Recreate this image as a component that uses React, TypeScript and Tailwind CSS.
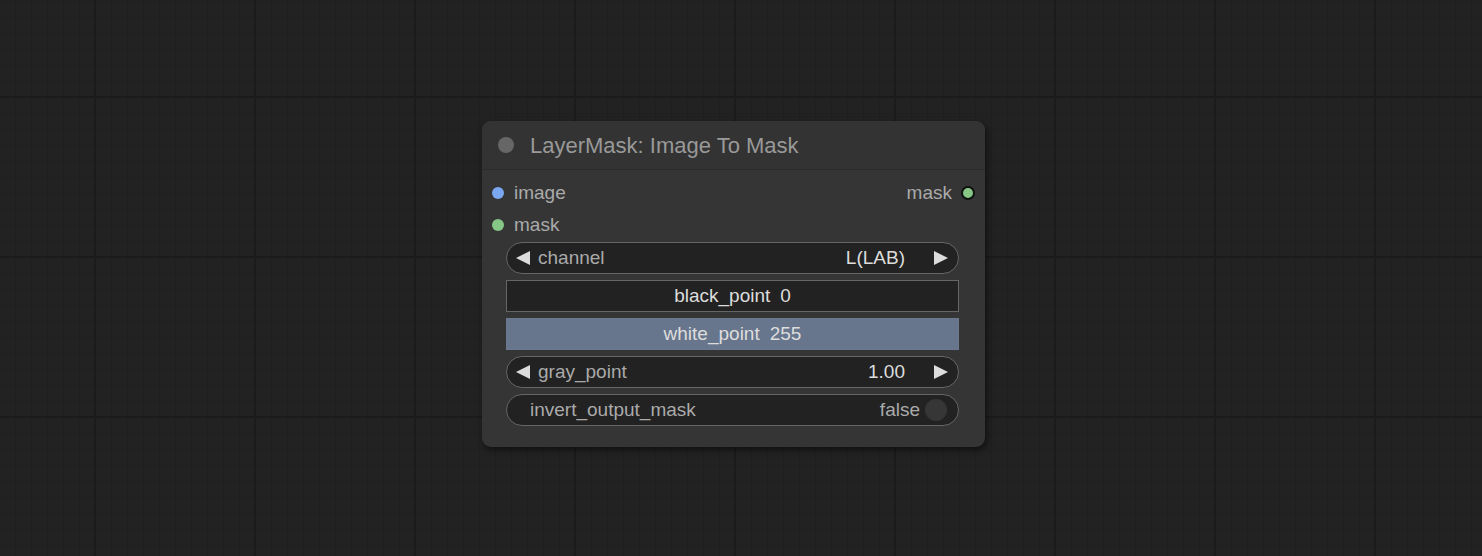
import React from 'react';

const font = { fontFamily: '"Liberation Sans", Arial, sans-serif' };

function Arrow({ dir }: { dir: 'left' | 'right' }) {
  return (
    <svg width="16" height="16" viewBox="0 0 16 16" className="shrink-0">
      {dir === 'left' ? (
        <polygon points="15,1 15,15 1,8" fill="#dddddd" />
      ) : (
        <polygon points="1,1 1,15 15,8" fill="#dddddd" />
      )}
    </svg>
  );
}

function ComboWidget({ label, value }: { label: string; value: string }) {
  return (
    <div className="flex h-[32px] items-center rounded-full border border-[#666] bg-[#222] pl-[8px] pr-[9px] text-[19px]">
      <Arrow dir="left" />
      <span className="ml-[7px] text-[#aaa]">{label}</span>
      <span className="ml-auto mr-[28px] text-[#ddd]">{value}</span>
      <Arrow dir="right" />
    </div>
  );
}

function Slider({ label, value, fill }: { label: string; value: string; fill?: boolean }) {
  return (
    <div
      className={`flex h-[32px] items-center justify-center border text-[19px] text-[#ddd] ${
        fill ? 'border-[#6a7890] bg-[#67768c]' : 'border-[#666] bg-[#222]'
      }`}
    >
      <span>{label}</span>
      <span className="ml-[10px]">{value}</span>
    </div>
  );
}

function Toggle({ label, value }: { label: string; value: string }) {
  return (
    <div className="flex h-[32px] items-center rounded-full border border-[#666] bg-[#222] pl-[23px] pr-[11px] text-[19px]">
      <span className="text-[#aaa]">{label}</span>
      <span className="ml-auto mr-[5px] text-[#aaa]">{value}</span>
      <span className="h-[22px] w-[22px] rounded-full bg-[#363636]" />
    </div>
  );
}

export default function App() {
  return (
    <div
      className="relative h-[556px] w-full overflow-hidden bg-[#222222] bg-[linear-gradient(to_right,#1b1b1b_2px,transparent_2px),linear-gradient(to_bottom,#1b1b1b_2px,transparent_2px),linear-gradient(to_right,#1f1f1f_1px,transparent_1px),linear-gradient(to_bottom,#1f1f1f_1px,transparent_1px)] [background-size:160px_160px,160px_160px,16px_16px,16px_16px] [background-position:94px_0,0_96px,15px_0,0_1px]"
      style={font}
    >
      {/* node on canvas */}
      <div className="absolute left-[482px] top-[121px] w-[503px] rounded-[9px] bg-[#353535] shadow-[2px_3px_6px_rgba(0,0,0,0.5)]">
        <div className="flex h-[49px] items-center rounded-t-[9px] border-b border-[#2b2b2b] bg-[#333333] pl-[16px]">
          <span className="h-[16px] w-[16px] rounded-full bg-[#666]" />
          <span className="ml-[16px] text-[22px] text-[#999]">LayerMask: Image To Mask</span>
        </div>

        <div className="flex flex-col px-[10px] pt-[12px]">
          <div className="flex h-[22px] items-center text-[19px] text-[#aaa]">
            <span className="h-[12px] w-[12px] rounded-full bg-[#7ba7f0]" />
            <span className="ml-[10px]">image</span>
            <span className="ml-auto">mask</span>
            <span className="ml-[9px] h-[14px] w-[14px] rounded-full border-2 border-[#111] bg-[#86c786]" />
          </div>
          <div className="mt-[10px] flex h-[22px] items-center text-[19px] text-[#aaa]">
            <span className="h-[12px] w-[12px] rounded-full bg-[#86c786]" />
            <span className="ml-[10px]">mask</span>
          </div>
        </div>

        <div className="flex flex-col gap-[6px] pb-[21px] pl-[24px] pr-[26px] pt-[6px]">
          <ComboWidget label="channel" value="L(LAB)" />
          <Slider label="black_point" value="0" />
          <Slider label="white_point" value="255" fill />
          <ComboWidget label="gray_point" value="1.00" />
          <Toggle label="invert_output_mask" value="false" />
        </div>
      </div>
    </div>
  );
}
